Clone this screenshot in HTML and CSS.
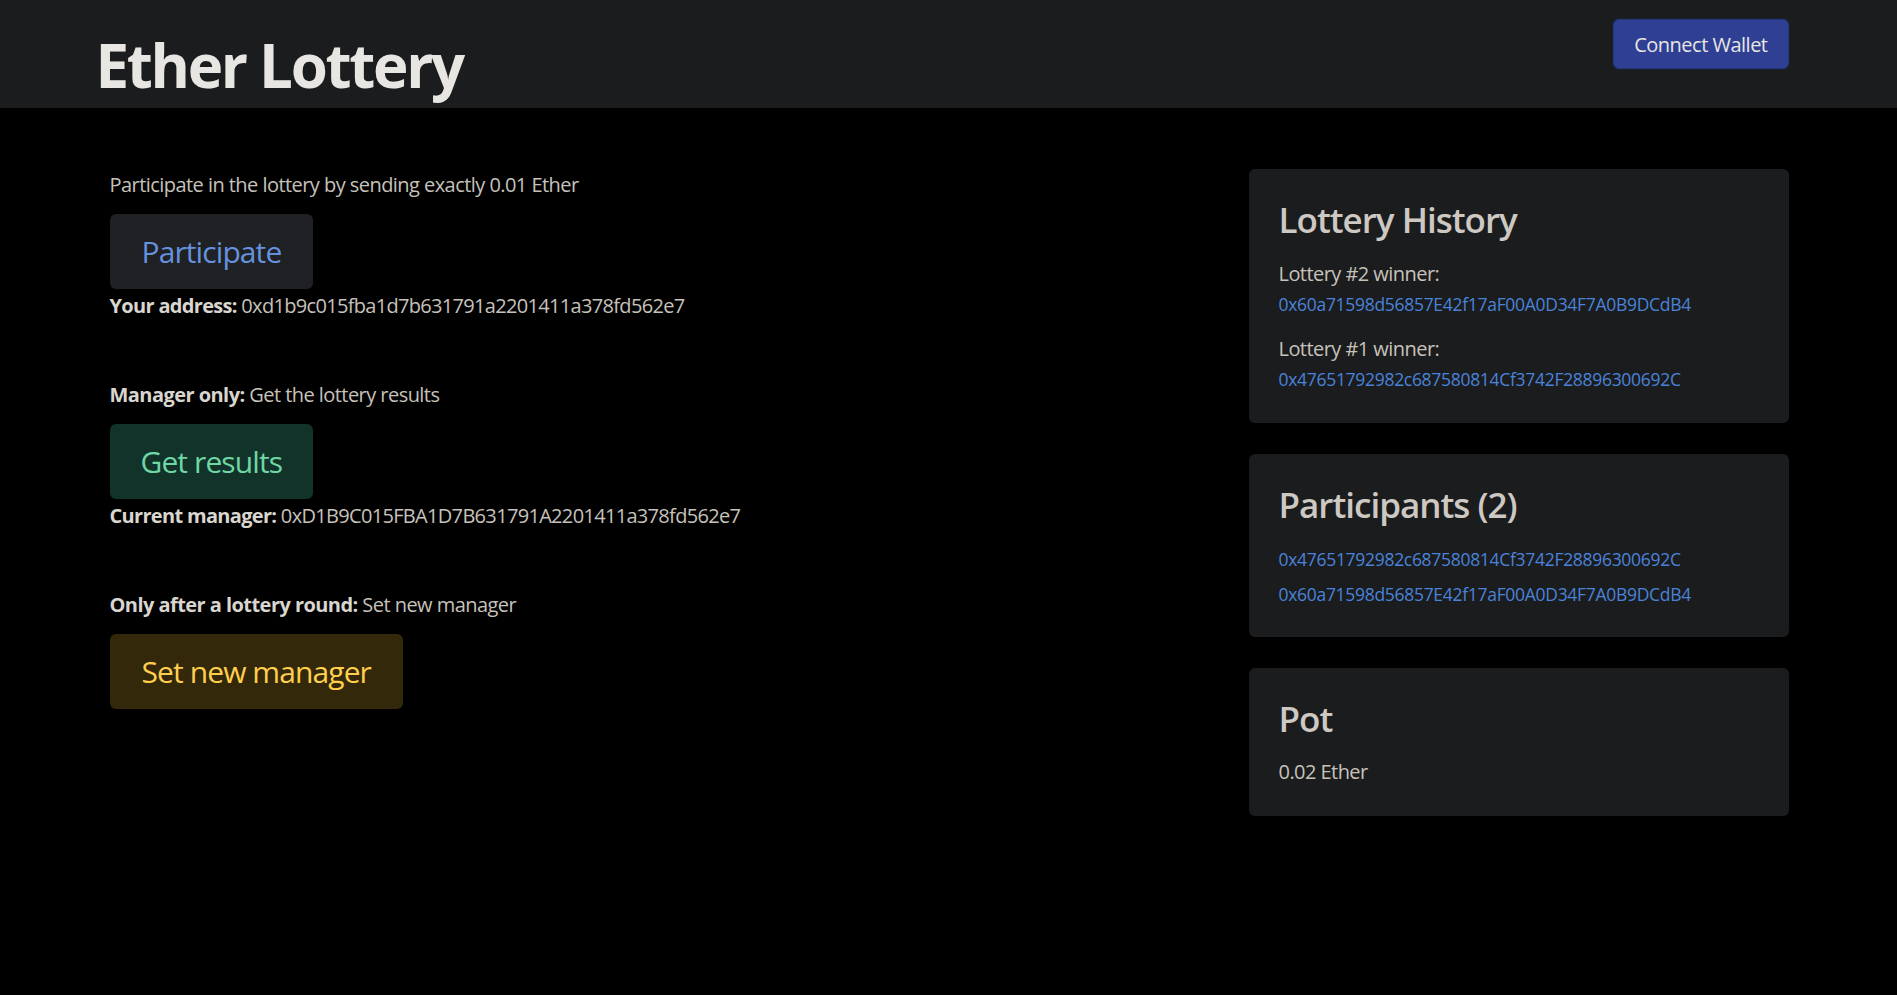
FILE: index.html
```html
<!DOCTYPE html>
<html lang="en">
<head>
<meta charset="utf-8">
<title>Ether Lottery</title>
<link rel="stylesheet" href="styles.css">
</head>
<body>
<header class="topbar">
  <div class="topbar-inner">
    <h1 class="brand">Ether Lottery</h1>
    <button class="btn-connect">Connect Wallet</button>
  </div>
</header>
<main class="page">
  <div class="layout">
    <section class="actions">
      <div class="action">
        <p class="action-label">Participate in the lottery by sending exactly 0.01 Ether</p>
        <button class="btn-large btn-participate">Participate</button>
        <p class="action-info"><strong>Your address:</strong> 0xd1b9c015fba1d7b631791a2201411a378fd562e7</p>
      </div>
      <div class="action">
        <p class="action-label"><strong>Manager only:</strong> Get the lottery results</p>
        <button class="btn-large btn-results">Get results</button>
        <p class="action-info"><strong>Current manager:</strong> 0xD1B9C015FBA1D7B631791A2201411a378fd562e7</p>
      </div>
      <div class="action">
        <p class="action-label"><strong>Only after a lottery round:</strong> Set new manager</p>
        <button class="btn-large btn-manager">Set new manager</button>
      </div>
    </section>
    <aside class="sidebar">
      <div class="card">
        <h2 class="card-title">Lottery History</h2>
        <div class="history-item">
          <p class="history-label">Lottery #2 winner:</p>
          <a class="addr" href="#">0x60a71598d56857E42f17aF00A0D34F7A0B9DCdB4</a>
        </div>
        <div class="history-item">
          <p class="history-label">Lottery #1 winner:</p>
          <a class="addr" href="#">0x47651792982c687580814Cf3742F28896300692C</a>
        </div>
      </div>
      <div class="card">
        <h2 class="card-title">Participants (2)</h2>
        <ul class="participants">
          <li><a class="addr" href="#">0x47651792982c687580814Cf3742F28896300692C</a></li>
          <li><a class="addr" href="#">0x60a71598d56857E42f17aF00A0D34F7A0B9DCdB4</a></li>
        </ul>
      </div>
      <div class="card card-pot">
        <h2 class="card-title">Pot</h2>
        <p class="pot-value">0.02 Ether</p>
      </div>
    </aside>
  </div>
</main>
</body>
</html>
```

FILE: styles.css
```css
* { box-sizing: border-box; }

html, body {
  margin: 0;
  padding: 0;
  background: #000;
}

body {
  font-family: "Open Sans", "Noto Sans", sans-serif;
  font-size: 20px;
  line-height: 1.5;
  letter-spacing: -0.55px;
  color: #c6c2bb;
  min-height: 995px;
}

.topbar {
  background: #1b1c1e;
  height: 108px;
}

.topbar-inner {
  width: 1680px;
  margin: 0 auto;
  display: flex;
  justify-content: space-between;
  align-items: flex-start;
}

.brand {
  margin: 32px 0 0 -13px;
  font-size: 60px;
  font-weight: 700;
  line-height: 1.125;
  color: #e8e6e3;
  letter-spacing: -2.3px;
}

.btn-connect {
  margin-top: 19px;
  height: 50px;
  padding: 0 20px;
  font-family: inherit;
  font-size: 20px;
  letter-spacing: -0.5px;
  color: #e8e6e3;
  background: #2e3f94;
  border: 1px solid #26347a;
  box-shadow: 0 0 0 1px #1c2230;
  border-radius: 6px;
  cursor: pointer;
}

.page {
  width: 1680px;
  margin: 0 auto;
  padding-top: 61px;
}

.layout {
  display: grid;
  grid-template-columns: 1fr 540px;
  column-gap: 31px;
}

.actions {
  display: flex;
  flex-direction: column;
  gap: 59px;
  padding-left: 1px;
  padding-top: 1px;
}

.action {
  display: flex;
  flex-direction: column;
  align-items: flex-start;
}

.action p { margin: 0; }

.action-label { margin-bottom: 14px !important; }

.action-info {
  margin-top: 2px !important;
  letter-spacing: -0.68px;
}

.action strong { color: #d9d5cf; font-weight: 700; }

.btn-large {
  height: 75px;
  padding: 0 32px;
  font-family: inherit;
  font-size: 30px;
  letter-spacing: -0.9px;
  border: none;
  border-radius: 6px;
  cursor: pointer;
}

.btn-results { padding: 0 31px; }

.btn-participate { background: #202124; color: #6592df; }
.btn-results { background: #12332a; color: #6fd6a6; }
.btn-manager { background: #33280a; color: #ffcf4d; }

.sidebar {
  display: flex;
  flex-direction: column;
  gap: 31px;
}

.card {
  background: #1b1c1e;
  border-radius: 6px;
  padding: 31px 30px 30px;
}

.card-pot { padding-bottom: 29px; }

.card-title {
  margin: 0 0 18px;
  font-size: 35px;
  font-weight: 600;
  line-height: 1.16;
  letter-spacing: -1px;
  color: #cdc8c1;
}

.history-item { display: flex; flex-direction: column; align-items: flex-start; }
.history-item + .history-item { margin-top: 17px; }
.history-item:last-child { margin-bottom: 1px; }

.history-item .addr { margin-top: 2px; }

.history-label { margin: 0; }

.addr {
  font-size: 17.5px;
  line-height: 26px;
  letter-spacing: -0.3px;
  color: #4a83d9;
  text-decoration: none;
}

.participants {
  list-style: none;
  margin: 0;
  padding: 3px 0 0;
}

.participants li { line-height: 26px; }
.participants li + li { margin-top: 9px; }

.pot-value { margin: -1px 0 0; }
```
